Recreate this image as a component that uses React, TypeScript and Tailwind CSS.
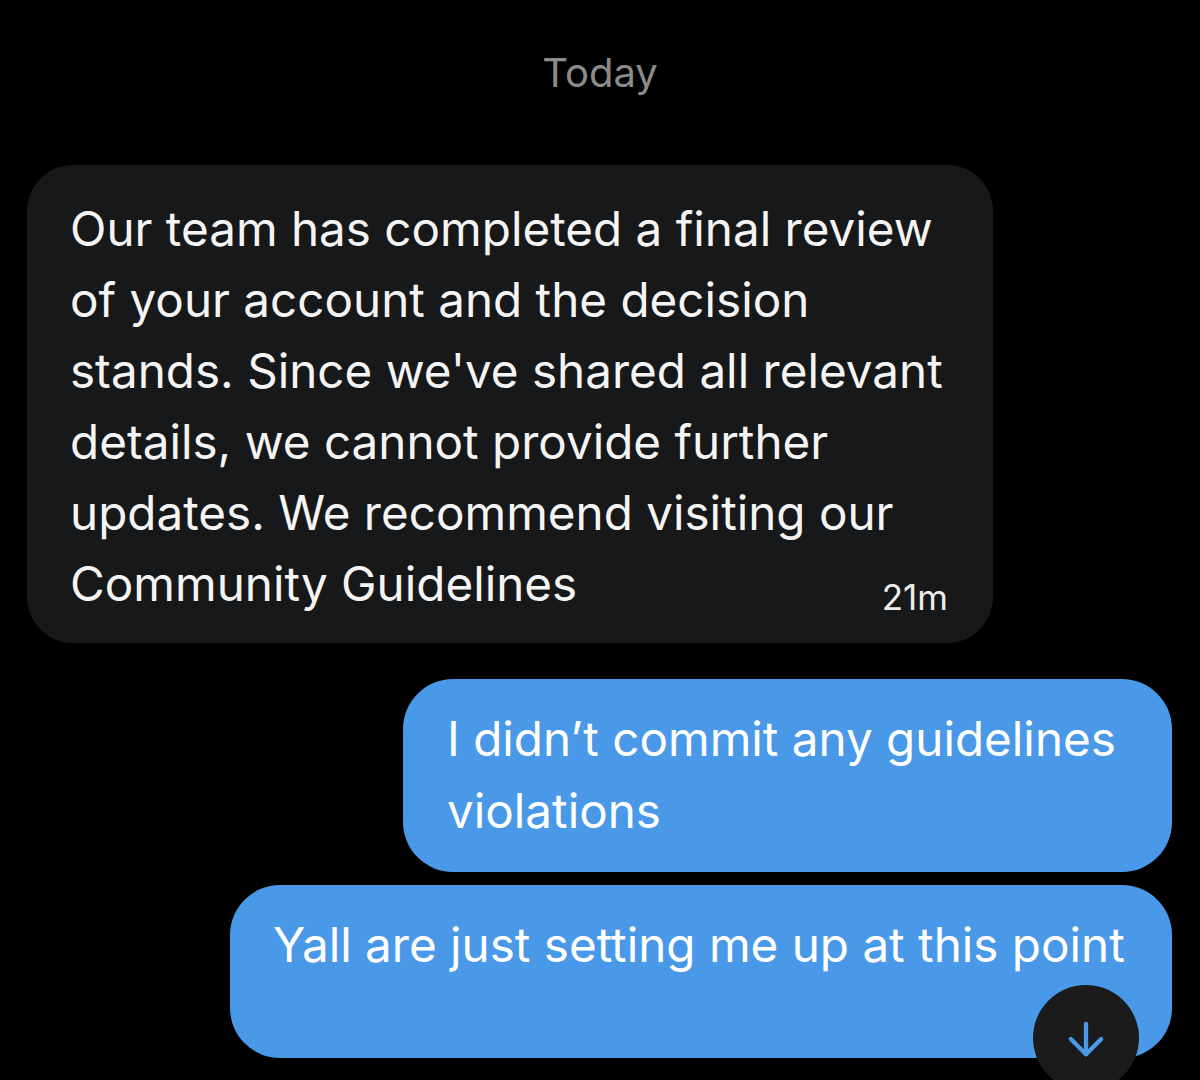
import { ArrowDown } from 'lucide-react';

const incoming = [
  'Our team has completed a final review',
  'of your account and the decision',
  "stands. Since we've shared all relevant",
  'details, we cannot provide further',
  'updates. We recommend visiting our',
  'Community Guidelines',
];

const font = { fontFamily: 'Inter, "Noto Sans", sans-serif' };

export default function App() {
  return (
    <div className="relative h-[1080px] w-[1200px] overflow-hidden bg-black text-white" style={font}>
      {/* Day separator */}
      <div className="flex h-[146px] justify-center pt-[47px]">
        <span className="text-[40px] leading-[52px] text-[#8b8b8b]">Today</span>
      </div>

      <div className="flex flex-col px-[27px]">
        {/* Received message */}
        <div className="mt-[19px] w-[966px] rounded-[46px] bg-[#17181a] pb-[26px] pl-[43px] pr-[45px] pt-[28px]">
          <div className="text-[47.6px] leading-[71px] text-[#f4f4f4]">
            {incoming.map((line) => (
              <div key={line} className="whitespace-nowrap">
                {line}
              </div>
            ))}
          </div>
          <div className="-mt-[42px] flex justify-end text-[35px] leading-[40px] text-[#ededed]">21m</div>
        </div>

        {/* Sent messages */}
        <div className="mt-[36px] flex flex-col items-end gap-[13px] pr-[1px]">
          <div className="w-[769px] rounded-[50px] bg-[#4a98e8] py-[24px] pb-[25px] pl-[44px] pr-[40px] text-[47.6px] leading-[72px]">
            <div className="whitespace-nowrap">I didn’t commit any guidelines</div>
            <div className="whitespace-nowrap">violations</div>
          </div>
          <div className="h-[173px] w-[942px] rounded-[50px] bg-[#4a98e8] pl-[43px] pr-[40px] pt-[24px] text-[47.6px] leading-[72px]">
            <div className="whitespace-nowrap">Yall are just setting me up at this point</div>
          </div>
        </div>
      </div>

      {/* Scroll to bottom */}
      <button className="absolute left-[1033px] top-[985px] flex h-[106px] w-[106px] items-center justify-center rounded-full bg-[#1b1b1c]">
        <ArrowDown className="mt-[2px] h-[52px] w-[52px] text-[#4a98e8]" strokeWidth={2} />
      </button>
    </div>
  );
}
